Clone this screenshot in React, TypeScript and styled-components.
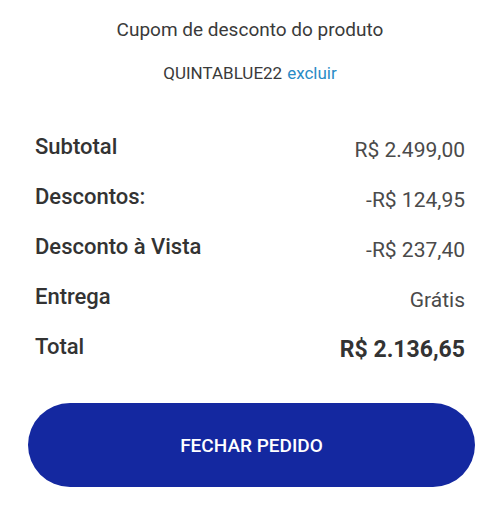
import React from 'react';
import styled, { createGlobalStyle } from 'styled-components';

const GlobalStyle = createGlobalStyle`
  html, body {
    margin: 0;
    padding: 0;
    background: #ffffff;
  }
  body {
    font-family: Roboto, "Liberation Sans", sans-serif;
    color: #333333;
  }
`;

const Page = styled.div`
  width: 500px;
  height: 515px;
  display: flex;
  flex-direction: column;
  box-sizing: border-box;
  padding-top: 18px;
`;

const Title = styled.div`
  text-align: center;
  font-size: 19px;
  line-height: 24px;
  color: #3a3a3a;
`;

const Coupon = styled.div`
  margin-top: 20px;
  text-align: center;
  font-size: 17px;
  line-height: 22px;
  color: #3a3a3a;
`;

const RemoveLink = styled.a`
  color: #2a8bc6;
  margin-left: 5px;
  cursor: pointer;
`;

const Summary = styled.div`
  margin-top: 50px;
  padding: 0 35px;
  display: flex;
  flex-direction: column;
  gap: 22px;
`;

const Row = styled.div`
  display: flex;
  justify-content: space-between;
  align-items: flex-start;
  height: 28px;
`;

const Label = styled.span`
  font-size: 22px;
  font-weight: 500;
  line-height: 26px;
  color: #333333;
`;

const Value = styled.span<{ $strong?: boolean }>`
  font-size: ${(p) => (p.$strong ? '23px' : '21px')};
  font-weight: ${(p) => (p.$strong ? 700 : 400)};
  line-height: 28px;
  padding-top: 2px;
  color: ${(p) => (p.$strong ? '#333333' : '#4a4a4a')};
`;

const CloseButton = styled.button`
  margin: 41px 25px 0 28px;
  height: 84px;
  border: none;
  border-radius: 42px;
  background: #1428a0;
  color: #ffffff;
  font-family: Roboto, "Liberation Sans", sans-serif;
  font-size: 19px;
  font-weight: 500;
  cursor: pointer;
`;

const rows = [
  { label: 'Subtotal', value: 'R$ 2.499,00' },
  { label: 'Descontos:', value: '-R$ 124,95' },
  { label: 'Desconto à Vista', value: '-R$ 237,40' },
  { label: 'Entrega', value: 'Grátis' },
  { label: 'Total', value: 'R$ 2.136,65', strong: true },
];

export default function App() {
  return (
    <>
      <GlobalStyle />
      <Page>
        <Title>Cupom de desconto do produto</Title>
        <Coupon>
          QUINTABLUE22<RemoveLink>excluir</RemoveLink>
        </Coupon>
        <Summary>
          {rows.map((r) => (
            <Row key={r.label}>
              <Label>{r.label}</Label>
              <Value $strong={r.strong}>{r.value}</Value>
            </Row>
          ))}
        </Summary>
        <CloseButton>FECHAR PEDIDO</CloseButton>
      </Page>
    </>
  );
}
